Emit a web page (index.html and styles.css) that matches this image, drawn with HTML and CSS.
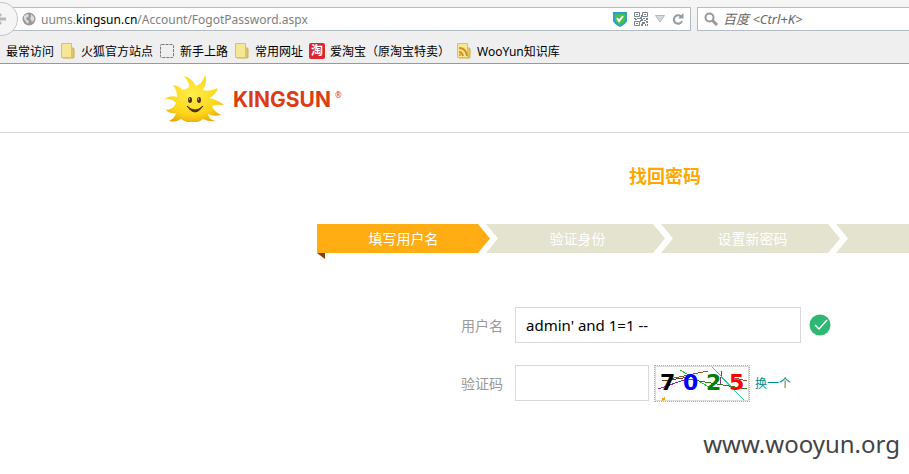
FILE: index.html
```html
<!DOCTYPE html>
<html lang="zh-CN">
<head>
<meta charset="utf-8">
<title>找回密码</title>
<link rel="stylesheet" href="styles.css">
</head>
<body>
<div class="browser">
  <div class="toolbar">
    <button class="back" aria-label="后退"><svg width="12" height="16" viewBox="0 0 12 16"><path d="M9 8H-2M4 3L-1 8l5 5" fill="none" stroke="#b8b8b8" stroke-width="3"/></svg></button>
    <div class="address">
      <svg width="14" height="14" viewBox="0 0 14 14"><circle cx="7" cy="7" r="6.500" fill="#999"/><path d="M2 4l3-2 2 1-1 2-2 1 1 2 2 1-1 3-2-2-2-3zM9 2l3 3v3l-2 2-1-2-1-2 1-1z" fill="#ddd"/></svg>
      <span class="url">uums.<b>kingsun.cn</b>/Account/FogotPassword.aspx</span>
      <svg width="14" height="15" viewBox="0 0 14 15"><path d="M0 0h14v9q-1 3-7 6Q1 12 0 9z" fill="#2a9fd0"/><path d="M2 2h10v6q-1 3-5 5-4-2-5-5z" fill="#4bbf4b"/><path d="M4 6l2 3 4-5" fill="none" stroke="#fff" stroke-width="2"/></svg>
      <svg class="qr" width="14" height="14" viewBox="0 0 14 14"><path d="M.5.500h5v4h-5zM8.500.500h5v4h-5zM.5 9.500h5v4h-5z" fill="none" stroke="#7b838e"/><path d="M2 2h2v1H2zM10 2h2v1h-2zM2 11h2v1H2zM7 3h1v2H7zM0 6h2v1H0zM3 6h3v1H3zM1 7h2v1H1zM6 5h2v2H6zM7 7h2v2H7zM9 6h2v1H9zM12 6h2v2h-2zM10 8h2v1h-2zM6 8h1v2H6zM12 9h2v2h-2zM8 10h3v2H8zM11 12h1v2h-1zM13 12h1v2h-1zM7 12h2v2H7z" fill="#7b838e"/></svg>
      <svg width="10" height="8" viewBox="0 0 10 8"><path d="M.5.500h9L5 7z" fill="#d5d9de" stroke="#b4bac2"/></svg>
      <svg width="12" height="12" viewBox="0 0 12 12"><path d="M9 3.500A4.200 4.200 0 1 0 10 8" fill="none" stroke="#929ba6" stroke-width="2"/><path d="M11.500 0v5.500H6z" fill="#929ba6"/></svg>
    </div>
    <div class="search">
      <svg width="15" height="15" viewBox="0 0 15 15"><circle cx="5.500" cy="5.500" r="4" fill="none" stroke="#999" stroke-width="2"/><path d="M8.500 8.500l4.500 4.500" stroke="#999" stroke-width="3"/></svg>
      <input type="text" aria-label="搜索" placeholder="百度 &lt;Ctrl+K&gt;">
    </div>
  </div>
  <nav class="bookmarks">
    <a href="#">最常访问</a>
    <a href="#"><svg width="16" height="16" viewBox="0 0 16 16"><path d="M8 5h5q1 0 1 1v8q0 1-1 1H3z" fill="#dfc86b" stroke="#c9ad4c"/><path d="M1.500.500h10v14h-10z" fill="#f5e796" stroke="#d8c268"/></svg>火狐官方站点</a>
    <a href="#"><svg width="16" height="16" viewBox="0 0 16 16"><rect x="1.500" y="1.500" width="13" height="13" rx="1" fill="none" stroke="#777" stroke-dasharray="3 1"/></svg>新手上路</a>
    <a href="#"><svg width="16" height="16" viewBox="0 0 16 16"><path d="M8 5h5q1 0 1 1v8q0 1-1 1H3z" fill="#dfc86b" stroke="#c9ad4c"/><path d="M1.500.500h10v14h-10z" fill="#f5e796" stroke="#d8c268"/></svg>常用网址</a>
    <a href="#"><span class="tao">淘</span>爱淘宝（原淘宝特卖）</a>
    <a href="#"><svg width="16" height="16" viewBox="0 0 16 16"><path d="M8 5h5q1 0 1 1v8q0 1-1 1H3z" fill="#dfc86b" stroke="#c9ad4c"/><path d="M1.500.500h10v14h-10z" fill="#f5e796" stroke="#d8c268"/><path d="M3 5q7 0 8 8M3 9q3 0 4 4" fill="none" stroke="#d98c1c" stroke-width="2"/><circle cx="4" cy="12" r="1" fill="#d98c1c"/></svg>WooYun知识库</a>
  </nav>
</div>
<header class="site">
  <svg width="60" height="48" viewBox="0 0 60 48"><defs><radialGradient id="sun" cx=".48" cy=".4" r=".62"><stop offset="0" stop-color="#ffee48"/><stop offset=".7" stop-color="#fdd51a"/><stop offset="1" stop-color="#eba90a"/></radialGradient></defs><path d="M15 15Q21 15 24 12 24 5 18 1q8 1 13 10 7-3 9-11 3 7-2 15 7 2 15-2-2 7-9 10 7 1 15 7-7-1-12 1 2 6 9 9-7 2-13-1 1 6 8 7-7 1-13-2-10 8-22 0-6 4-12 2 6-3 7-8-6 1-10-3 8-1 10-7-5-5-12-4 7-4 13-2 0-7-4-12 7 1 9 5z" transform="translate(0 1)" fill="url(#sun)"/><ellipse cx="25" cy="26" rx="2" ry="3" fill="#4d3210"/><ellipse cx="34" cy="26" rx="2" ry="3" fill="#4d3210"/><path d="M24 25h1M33 25h1" stroke="#fff" fill="none"/><path d="M22 32q8 12 16 0-8 8-16 0z" fill="#4d3210" stroke="#4d3210"/></svg>
  <span class="brand">KINGSUN</span><sup>®</sup>
</header>
<main class="content">
  <h1>找回密码</h1>
  <ol class="steps"><li class="active">填写用户名</li><li>验证身份</li><li>设置新密码</li><li></li></ol>
  <form class="form">
    <div class="row"><label for="user">用户名</label><input id="user" type="text" value="admin' and 1=1 --"><svg class="ok" width="22" height="22" viewBox="0 0 22 22"><circle cx="11" cy="11" r="10.500" fill="#2fb873"/><path d="M6 11l4 4 8-9" fill="none" stroke="#fff" stroke-width="1.500"/></svg></div>
    <div class="row"><label for="code">验证码</label><input id="code" class="short" type="text">
      <div class="captcha">
        <svg class="noise" width="94" height="35" viewBox="0 0 94 35" fill="none" shape-rendering="crispEdges"><path d="M14 13L53 5M80 12l12 3" stroke="#8b5a2b"/><path d="M3 23l29-10M67 5l-2 13" stroke="#8b2f8b"/><path d="M25 4l29 17" stroke="#1fd61f"/><path d="M7 15l28-4" stroke="#6b3a2a"/><path d="M32 13l60 10" stroke="#2c7a1c"/><path d="M57 1l32 33" stroke="#1fd694"/><path d="M7 34l3-2" stroke="#ffa500" stroke-width="2"/></svg>
        <span class="d1">7</span><span class="d2">0</span><span class="d3">2</span><span class="d4">5</span>
      </div>
      <a href="#">换一个</a></div>
  </form>
</main>
<footer>www.wooyun.org</footer>
</body>
</html>
```
FILE: styles.css
```css
body { margin: 0; overflow: hidden; background: #fff; font-family: "Noto Sans", "Noto Sans CJK SC", sans-serif; font-size: 14px; }
svg { flex: none; display: block; }
.browser { background: #efefef; border-bottom: 1px solid #999; font-size: 12px; }
.toolbar { display: flex; gap: 6px; height: 38px; padding-top: 7px; box-sizing: border-box; background: linear-gradient(#f5f5f5, #efefef); }
.back { position: absolute; left: -16px; top: 2px; width: 34px; height: 34px; padding: 0 0 0 12px; border: 1px solid #c4c4c4; border-radius: 50%; background: #f5f5f5; }
.address, .search { display: flex; align-items: center; height: 24px; box-sizing: border-box; border: 1px solid #b4bcc6; background: #fff; }
.address { flex: 1; padding: 0 6px 0 21px; gap: 7px; color: #808080; }
.url { flex: 1; margin-left: -2px; }
.url b { font-weight: 400; color: #000; }
.search { width: 212px; padding-left: 6px; gap: 4px; border-right: 0; }
.search input { width: 100%; border: 0; padding: 0; font: italic 13px "Noto Sans", "Noto Sans CJK SC", sans-serif; }
.search input::placeholder { color: #666; }
.bookmarks { display: flex; align-items: center; gap: 6px; height: 25px; padding-left: 6px; white-space: nowrap; }
.bookmarks a { display: flex; align-items: center; gap: 5px; color: #000; text-decoration: none; }
.tao { width: 16px; height: 16px; border-radius: 2px; background: #dc2630; color: #fff; font-size: 12px; line-height: 15px; text-align: center; font-weight: 700; }
.site { display: flex; align-items: center; height: 68px; padding-left: 165px; border-bottom: 1px solid #d9d9d9; }
.brand { margin-left: 8px; color: #dc3c14; font: 700 21px/30px Inter, sans-serif; padding-top: 4px; }
.site sup { color: #dc3c14; font-size: 8px; margin: -8px 0 0 4px; }
.content { width: 696px; margin-left: 317px; }
h1 { margin: 0; padding-top: 30px; color: #ffa800; font-size: 18px; line-height: 26px; text-align: center; }
.steps { display: flex; position: relative; list-style: none; margin: 35px 0 0; padding: 0; line-height: 29px; text-align: center; color: #fff; }
.steps li { width: 179px; height: 29px; margin-left: -4px; padding-left: 4px; box-sizing: border-box; flex: none; background: #e3e3cf; clip-path: polygon(0 0, calc(100% - 12px) 0, 100% 50%, calc(100% - 12px) 100%, 0 100%, 12px 50%); }
.steps .active { width: 173px; margin-left: 0; padding-left: 0; background: #ffad12; clip-path: polygon(0 0, calc(100% - 12px) 0, 100% 50%, calc(100% - 12px) 100%, 0 100%); }
.steps::after { content: ""; position: absolute; left: 0; top: 29px; width: 8px; height: 6px; background: #853f04; clip-path: polygon(0 0, 100% 0, 100% 100%); }
.form { margin-top: 54px; padding-left: 144px; }
.row { display: flex; align-items: center; height: 36px; margin-bottom: 22px; }
.row label { width: 54px; color: #999; }
.row input { width: 286px; height: 36px; box-sizing: border-box; border: 1px solid #d9d9d9; padding: 0 10px; font: 15px "Noto Sans", sans-serif; }
.row .short { width: 134px; }
.ok { margin-left: 8px; }
.captcha { position: relative; display: flex; width: 89px; height: 35px; padding-left: 5px; margin: 0 5px; border: 1px dotted #aaa; box-shadow: inset 0 0 0 1px #d9d9d9; font: 700 22px/33px "DejaVu Sans", sans-serif; }
.captcha span { position: relative; width: 23px; flex: none; }
.d1 { color: #000; }
.d2 { color: #00f; }
.d3 { color: #008000; }
.d4 { color: #f00; }
.noise { position: absolute; left: 0; top: 0; }
.row a { color: #008c8c; font-size: 12px; text-decoration: none; }
footer { text-align: right; padding: 4px 9px 0 0; font-size: 24px; color: #444; }
```
